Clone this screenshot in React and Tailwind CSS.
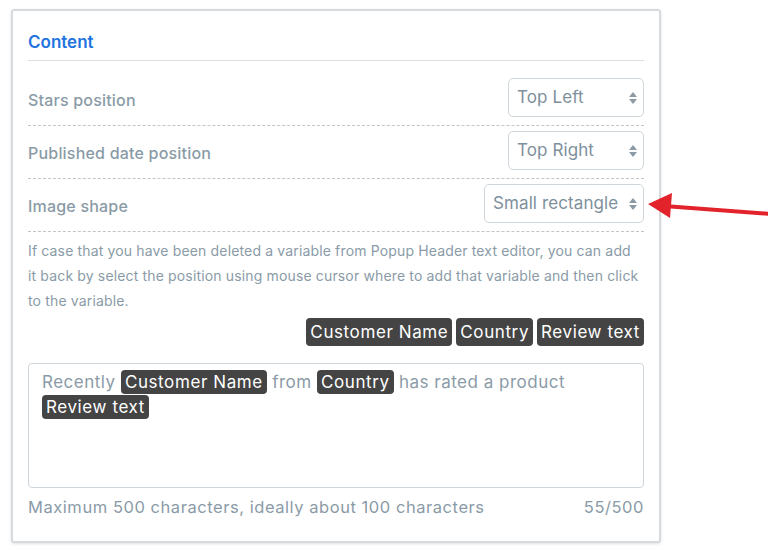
import React from "react";

const font = { fontFamily: '"Inter", "Noto Sans", sans-serif' };

function SelectBox({ value, width }) {
  return (
    <div className={`flex items-center justify-between h-[39px] border border-[#cfd6db] rounded-[5px] pl-[8px] pr-[5px] text-[17px] text-[#7e909c] ${width}`}>
      <span className="tracking-[0.1px]">{value}</span>
      <svg width="10" height="16" viewBox="0 0 10 16" className="shrink-0">
        <path d="M5 2 L9 7 L1 7 Z" fill="#8b9aa5" />
        <path d="M5 14 L9 9 L1 9 Z" fill="#8b9aa5" />
      </svg>
    </div>
  );
}

function Row({ label, value, width, first }) {
  return (
    <div className={`flex items-center justify-between border-b border-dashed border-[#bfc6cb] ${first ? "pt-[17px]" : "pt-[5px]"} pb-[8px]`}>
      <div className="pt-[5px] text-[16px] font-medium tracking-[0.2px] text-[#8a9ba7]">{label}</div>
      <SelectBox value={value} width={width} />
    </div>
  );
}

function Chip({ children, big }) {
  return (
    <span className={`inline-block bg-[#444444] text-white rounded-[4px] text-[17px] tracking-[0.6px] ${big ? "h-[28px] leading-[28px] px-[4px]" : "h-[24px] leading-[24px] px-[4px]"}`}>
      {children}
    </span>
  );
}

export default function App() {
  return (
    <div className="relative w-[768px] h-[557px] bg-white overflow-hidden" style={font}>
      <div className="ml-[11px] mt-[9px] w-[650px] h-[534px] border-2 border-[#d6dadd] rounded-[3px] shadow-[0_1px_3px_rgba(0,0,0,0.12)] px-[15px]">
        <div className="pt-[19px] pb-[5px] leading-[25px] border-b border-[#dcdfe2] text-[17px] font-semibold text-[#1f74e0]">Content</div>

        <Row first label="Stars position" value="Top Left" width="w-[136px]" />
        <Row label="Published date position" value="Top Right" width="w-[136px]" />
        <Row label="Image shape" value="Small rectangle" width="w-[160px]" />

        <p className="mt-[6px] text-[14px] leading-[25px] tracking-[0.15px] text-[#8a9ba7] whitespace-nowrap">
          If case that you have been deleted a variable from Popup Header text editor, you can add
          <br />
          it back by select the position using mouse cursor where to add that variable and then click
          <br />
          to the variable.
        </p>

        <div className="mt-[5px] flex justify-end gap-[4px]">
          <Chip big>Customer Name</Chip>
          <Chip big>Country</Chip>
          <Chip big>Review text</Chip>
        </div>

        <div className="mt-[17px] h-[125px] border border-[#cfd6db] rounded-[4px] px-[13px] pt-[6px] text-[17px] leading-[25px] tracking-[0.5px] text-[#8a9ba7]">
          Recently <Chip>Customer Name</Chip> from <Chip>Country</Chip> has rated a product
          <br />
          <Chip>Review text</Chip>
        </div>

        <div className="mt-[7px] flex justify-between text-[16.5px] tracking-[0.55px] text-[#8a9ba7]">
          <span>Maximum 500 characters, ideally about 100 characters</span>
          <span>55/500</span>
        </div>
      </div>

      <svg className="absolute left-0 top-0" width="768" height="557" viewBox="0 0 768 557">
        <line x1="772" y1="214" x2="664" y2="206" stroke="#e2232b" strokeWidth="4" />
        <path d="M648 204 L672 193 L670 218 Z" fill="#e2232b" />
      </svg>
    </div>
  );
}
